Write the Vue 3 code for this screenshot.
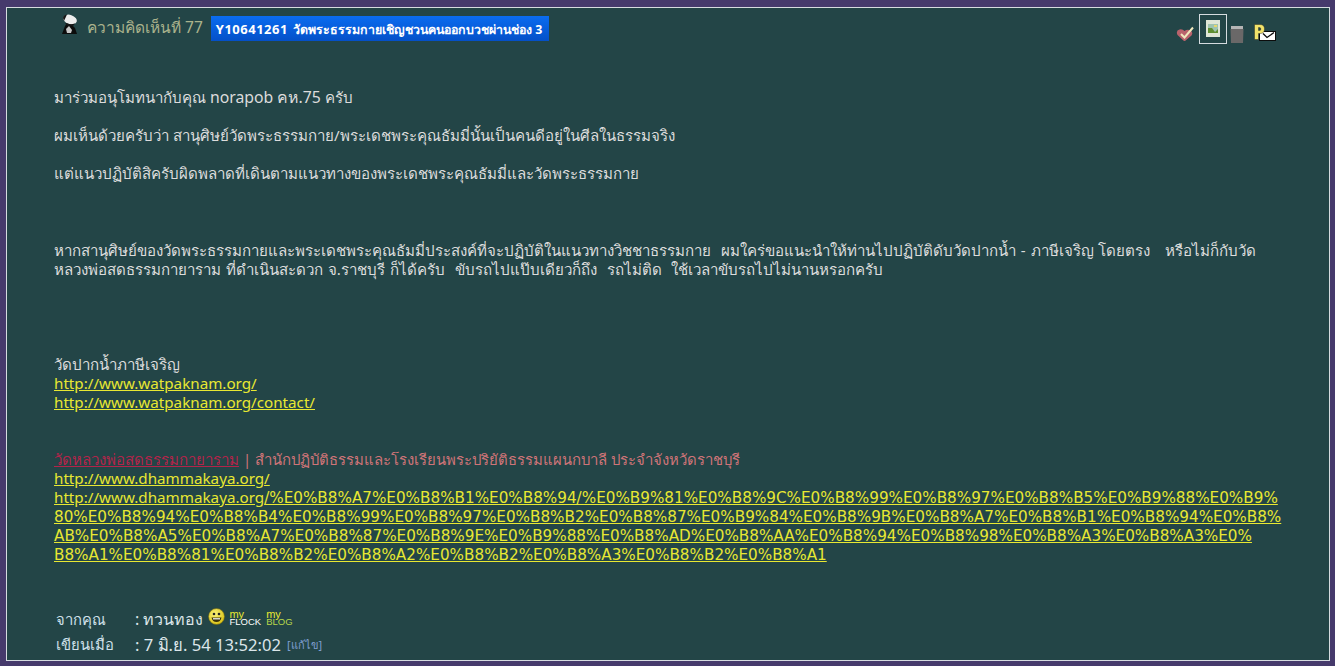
<template>
  <div class="page">
    <div class="panel">
      <div class="head">
        <div class="head-left">
          <svg class="avatar" width="18" height="20" viewBox="0 0 18 20">
            <path d="M1 20 L4 12 L6 9 L11 11 L14 14 L16 20 Z" fill="#0c0c0c" />
            <path d="M5 15 L8 12 L11 16 L10 19 L6 19 Z" fill="#c8c8c8" />
            <ellipse cx="9" cy="5.5" rx="7" ry="4.6" fill="#ededed" transform="rotate(18 9 5.5)" />
            <path d="M2 4 Q2 1 6 0.5 L3 7 Z" fill="#161616" />
            <path d="M4 9 Q9 11 14 9.5 L12 12 L6 11.5 Z" fill="#161616" />
          </svg>
          <span class="num">ความคิดเห็นที่ 77</span>
          <span class="title"><b class="title-id">Y10641261</b> <b class="title-th">วัดพระธรรมกายเชิญชวนคนออกบวชผ่านช่อง 3</b></span>
        </div>
        <div class="tools">
          <svg width="20" height="16" viewBox="0 0 20 16" class="t1">
            <path d="M8 15 L1.5 9 Q-0.5 4.5 3.5 3.5 Q6.5 2.8 8.5 5 Q11.5 3 14.5 4.5 Q17.5 6.5 15.5 9.5 L9 15 Z" fill="#b9626c" />
            <path d="M5 8 L8.5 11.5 L17 1.5" fill="none" stroke="#efe7bd" stroke-width="2" />
          </svg>
          <span class="imgbox">
            <svg width="14" height="17" viewBox="0 0 14 17">
              <rect width="14" height="17" fill="#dfe6d6" />
              <rect x="2" y="4" width="10" height="9" fill="#9fc3b0" />
              <path d="M2 8 L6 8 L9 12 L12 9 L12 13 L2 13 Z" fill="#5f8f32" />
              <rect x="8" y="5" width="3" height="2" fill="#e8d86a" />
            </svg>
          </span>
          <svg width="14" height="18" viewBox="0 0 14 18" class="t3">
            <path d="M1 1 H13 V4 H1 Z" fill="#b5b5b5" />
            <path d="M0.5 4 H13.5 L13 18 H1 Z" fill="#6a6868" />
          </svg>
          <svg width="22" height="17" viewBox="0 0 22 17" class="t4">
            <rect x="5.5" y="7.5" width="16" height="9" fill="#fff" stroke="#0c0c0c" />
            <path d="M9 9.5 L13 13.5 L20 8.5" fill="none" stroke="#0c0c0c" stroke-width="1.3" />
            <path d="M0.5 0.5 H6 Q10.5 0.5 10.5 5 Q10.5 9.5 6 9.5 H4.5 V15.5 H0.5 Z M4.5 3.5 V6.5 H5.5 Q6.8 6.5 6.8 5 Q6.8 3.5 5.5 3.5 Z" fill="#f2e36a" fill-rule="evenodd" stroke="#1a1a1a" stroke-width="0.4" />
          </svg>
        </div>
      </div>

      <div class="body">
        <p>มาร่วมอนุโมทนากับคุณ <span class="lat">norapob คห.75</span> ครับ</p>
        <p>ผมเห็นด้วยครับว่า สานุศิษย์วัดพระธรรมกาย/พระเดชพระคุณธัมมี่นั้นเป็นคนดีอยู่ในศีลในธรรมจริง</p>
        <p class="gap-l">แต่แนวปฏิบัติสิครับผิดพลาดที่เดินตามแนวทางของพระเดชพระคุณธัมมี่และวัดพระธรรมกาย</p>
        <p class="gap-xl wide">หากสานุศิษย์ของวัดพระธรรมกายและพระเดชพระคุณธัมมี่ประสงค์ที่จะปฏิบัติในแนวทางวิชชาธรรมกาย&nbsp; ผมใคร่ขอแนะนำให้ท่านไปปฏิบัติดับวัดปากน้ำ - ภาษีเจริญ โดยตรง&nbsp;&nbsp; หรือไม่ก็กับวัด<br />หลวงพ่อสดธรรมกายาราม ที่ดำเนินสะดวก จ.ราชบุรี ก็ได้ครับ&nbsp; ขับรถไปแป๊บเดียวก็ถึง&nbsp; รถไม่ติด&nbsp; ใช้เวลาขับรถไปไม่นานหรอกครับ</p>
        <p>วัดปากน้ำภาษีเจริญ<br /><a href="#" class="url">http://www.watpaknam.org/</a><br /><a href="#" class="url">http://www.watpaknam.org/contact/</a></p>
        <p class="gap-m"><a href="#" class="red">วัดหลวงพ่อสดธรรมกายาราม</a><span class="pink"> | สำนักปฏิบัติธรรมและโรงเรียนพระปริยัติธรรมแผนกบาลี ประจำจังหวัดราชบุรี</span><br /><a href="#" class="url">http://www.dhammakaya.org/</a><br /><a href="#" class="url">http://www.dhammakaya.org<span class="code">/%E0%B8%A7%E0%B8%B1%E0%B8%94/%E0%B9%81%E0%B8%9C%E0%B8%99%E0%B8%97%E0%B8%B5%E0%B9%88%E0%B9%<br />80%E0%B8%94%E0%B8%B4%E0%B8%99%E0%B8%97%E0%B8%B2%E0%B8%87%E0%B9%84%E0%B8%9B%E0%B8%A7%E0%B8%B1%E0%B8%94%E0%B8%<br />AB%E0%B8%A5%E0%B8%A7%E0%B8%87%E0%B8%9E%E0%B9%88%E0%B8%AD%E0%B8%AA%E0%B8%94%E0%B8%98%E0%B8%A3%E0%B8%A3%E0%<br />B8%A1%E0%B8%81%E0%B8%B2%E0%B8%A2%E0%B8%B2%E0%B8%A3%E0%B8%B2%E0%B8%A1</span></a></p>
      </div>

      <div class="meta">
        <div class="row">
          <span class="label">จากคุณ</span>
          <span class="val">: ทวนทอง</span>
          <svg width="17" height="17" viewBox="0 0 17 17" class="smile">
            <defs>
              <radialGradient id="smileFill" cx="40%" cy="35%" r="70%">
                <stop offset="0" stop-color="#fbf27a" />
                <stop offset="1" stop-color="#d8c010" />
              </radialGradient>
            </defs>
            <circle cx="8.5" cy="8.5" r="8" fill="url(#smileFill)" stroke="#6d6414" stroke-width="0.6" />
            <circle cx="6" cy="6" r="1.3" fill="#222" /><circle cx="11" cy="6" r="1.3" fill="#222" />
            <path d="M3.5 9.5 H13.5 Q12.5 14 8.5 14 Q4.5 14 3.5 9.5 Z" fill="#3a3208" />
            <path d="M5 10.2 H12 V11.4 H5 Z" fill="#fff" />
          </svg>
          <span class="badge b1"><i>my</i><i>FLOCK</i></span>
          <span class="badge b2"><i>my</i><i>BLOG</i></span>
        </div>
        <div class="row">
          <span class="label">เขียนเมื่อ</span>
          <span class="val big">: 7 มิ.ย. 54 13:52:02</span>
          <span class="edit">[แก้ไข]</span>
        </div>
      </div>
    </div>
  </div>
</template>

<script setup>
</script>

<style>
html, body { margin: 0; background: #463a6c; overflow: hidden; }
</style>

<style scoped>
.page {
  height: 666px;
  padding: 7px 5px 0 6px;
  box-sizing: border-box;
  overflow: hidden;
  font-family: "Noto Sans", "DejaVu Sans", sans-serif;
}
.panel {
  background: #234547;
  border: 1px solid #d6dce0;
  height: 654px;
  box-sizing: border-box;
  padding: 0 47px;
  color: #dcdcdc;
  overflow: hidden;
}
.head {
  display: flex;
  justify-content: space-between;
  height: 60px;
}
.head-left {
  display: flex;
  align-items: flex-start;
  padding-top: 6px;
  padding-left: 7px;
}
.avatar { margin-right: 8px; }
.num { color: #aab28c; font-size: 15.5px; line-height: 26px; margin-right: 8px; white-space: nowrap; }
.title {
  background: linear-gradient(#0a6cf0, #0450c8);
  color: #fff;
  height: 25px;
  line-height: 25px;
  margin-top: 2px;
  padding: 0 0 0 5px;
  white-space: nowrap;
  width: 338px;
  box-sizing: border-box;
}
.title-id { font-size: 13px; letter-spacing: 0.5px; margin-right: 1px; }
.title-th { font-size: 12.4px; }
.tools { display: flex; align-items: flex-start; padding-top: 6px; margin-right: 6px; }
.t1 { margin-top: 12px; margin-right: 3px; }
.imgbox {
  width: 28px; height: 30px;
  border: 1px solid #d6dce0;
  box-sizing: border-box;
  display: flex; align-items: flex-start; justify-content: center;
  padding-top: 5px;
  margin-right: 3px;
}
.t3 { margin-top: 11px; margin-right: 10px; }
.t4 { margin-top: 10px; }
.body { font-size: 15.1px; line-height: 19px; padding-top: 20px; }
p { margin: 0 0 19px; white-space: nowrap; }
.lat { font-size: 15.8px; }
.wide { word-spacing: 1px; }
.gap-l { margin-bottom: 58px; }
.gap-xl { margin-bottom: 76px; }
.gap-m { margin-top: 38px; margin-bottom: 0; }
a { color: #e8e832; }
.url { font-size: 15.2px; }
.code { font-family: "DejaVu Sans", sans-serif; line-height: 0; }
.red { color: #b3244a; }
.pink { color: #cf7478; font-size: 14.95px; }
.meta { margin-top: 43px; padding-left: 2px; color: #cfe0ea; font-size: 14.8px; }
.row { display: flex; align-items: center; height: 25px; }
.label { width: 79px; }
.val { color: #dce6ea; font-size: 16px; }
.big { font-size: 16.6px; }
.smile { margin: -6px 4px 0 5px; }
.badge {
  display: inline-flex;
  flex-direction: column;
  font-family: "Liberation Sans", sans-serif;
  font-size: 9.5px;
  line-height: 8px;
  margin-right: 5px;
  margin-top: -4px;
}
.badge i { font-style: normal; }
.badge i:first-child { font-size: 11px; }
.b1 { color: #fff; }
.b1 i:first-child { color: #e8e832; }
.b2 { color: #b8d84a; }
.b2 i:first-child { color: #e8e832; }
.edit { color: #7f9fd0; font-size: 11px; margin-left: 6px; }
</style>
